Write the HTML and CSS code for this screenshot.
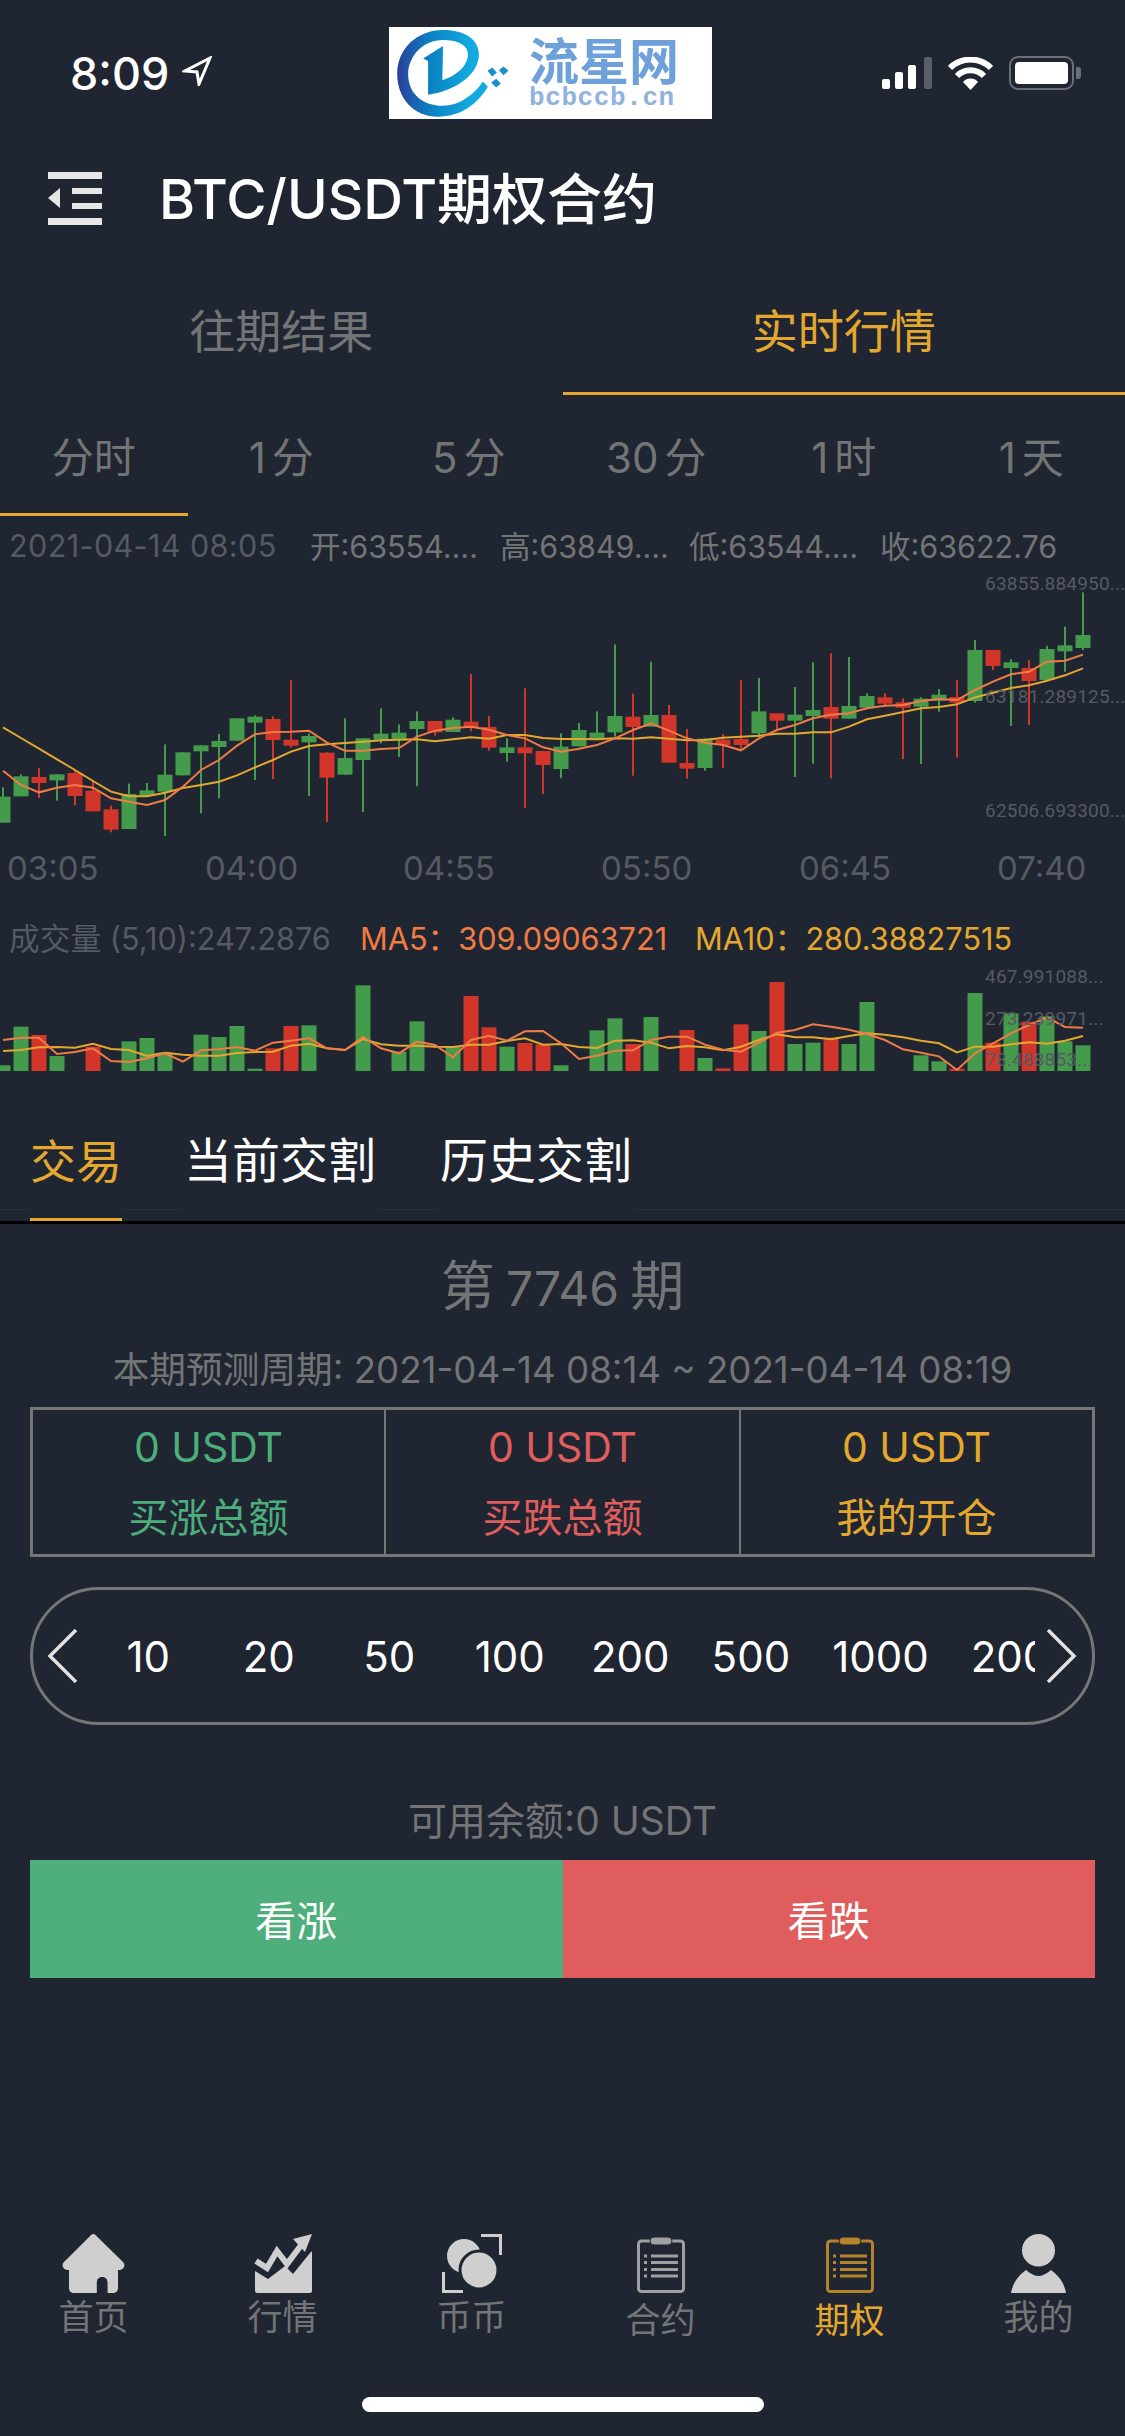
FILE: index.html
```html
<!DOCTYPE html>
<html lang="zh-CN">
<head>
    <meta charset="UTF-8">
    <meta name="viewport" content="width=device-width, initial-scale=1.0">
    <title>BTC/USDT期权合约</title>
    <link rel="stylesheet" href="styles.css">
</head>
<body>
    <div class="page">
        <div class="status-bar">
            <div class="status-time">
                <span>8:09</span>
                <svg class="location-icon" viewBox="0 0 30 30"><path d="M28 2 L3 15 L15 16 L17 28 Z"/></svg>
            </div>
            <div class="logo">
                <svg class="logo-mark" viewBox="112 57 336 262">
                    <defs>
                        <linearGradient id="logo-fill" x1="0" y1="0" x2="1" y2="0">
                            <stop offset="0" stop-color="#2c3f9a"/>
                            <stop offset="0.35" stop-color="#0b7fc1"/>
                            <stop offset="0.8" stop-color="#12aade"/>
                        </linearGradient>
                    </defs>
                    <path fill="url(#logo-fill)" d="M205 252 L205 150 L190 143 L250 105 L248 208 C290 195 325 165 325 130 C325 100 290 87 250 87 C190 87 145 135 145 190 C145 250 190 285 250 285 C300 285 345 250 370 212 L385 228 C350 285 300 318 235 318 C160 318 112 260 112 190 C112 110 175 57 250 57 C315 57 358 85 358 130 C358 190 290 240 205 252 Z"/>
                    <path fill="#1a8ecb" d="M384 180 L398 170 L412 185 L398 197 Z M418 178 L432 167 L447 180 L432 193 Z M395 215 L410 204 L424 218 L410 230 Z"/>
                </svg>
                <div class="logo-text">
                    <div class="logo-name">流星网</div>
                    <div class="logo-url">bcbccb.cn</div>
                </div>
            </div>
            <div class="status-icons">
                <svg class="signal-icon" viewBox="0 0 50 32">
                    <rect x="0" y="22" width="8" height="10" rx="2" fill="#fff"/>
                    <rect x="13" y="15" width="8" height="17" rx="2" fill="#fff"/>
                    <rect x="26" y="8" width="8" height="24" rx="2" fill="#fff"/>
                    <rect x="42" y="0" width="8" height="32" rx="2" fill="#5b5f67"/>
                </svg>
                <svg class="wifi-icon" viewBox="0 0 45 33">
                    <path d="M2 11 A29 29 0 0 1 43 11" fill="none" stroke="#fff" stroke-width="6"/>
                    <path d="M9 19 A19 19 0 0 1 36 19" fill="none" stroke="#fff" stroke-width="6"/>
                    <path d="M15 25 A10 10 0 0 1 30 25 L22.5 33 Z" fill="#fff"/>
                </svg>
                <div class="battery">
                    <div class="battery-level"></div>
                </div>
                <div class="battery-nub"></div>
            </div>
        </div>

        <div class="header">
            <svg class="menu-icon" viewBox="0 0 54 53">
                <rect x="0" y="0" width="54" height="7"/>
                <rect x="24" y="16" width="30" height="6"/>
                <rect x="24" y="31" width="30" height="6"/>
                <rect x="0" y="46" width="54" height="7"/>
                <path d="M12 16 L12 36 L0 26 Z"/>
            </svg>
            <h1 class="title">BTC/USDT期权合约</h1>
        </div>

        <div class="main-tabs">
            <div class="main-tab">往期结果</div>
            <div class="main-tab active">实时行情</div>
        </div>

        <div class="period-tabs">
            <div class="period-tab active">分时</div>
            <div class="period-tab">1 分</div>
            <div class="period-tab">5 分</div>
            <div class="period-tab">30 分</div>
            <div class="period-tab">1 时</div>
            <div class="period-tab">1 天</div>
        </div>

        <div class="ohlc">
            <span class="ohlc-date">2021-04-14 08:05</span>
            <span>开:63554....</span>
            <span>高:63849....</span>
            <span>低:63544....</span>
            <span>收:63622.76</span>
        </div>

        <div class="chart candle-chart">
            <svg id="candles" width="1125" height="270"></svg>
            <div class="axis-label price-high">63855.884950...</div>
            <div class="axis-label price-mid">63181.289125...</div>
            <div class="axis-label price-low">62506.693300...</div>
        </div>

        <div class="times">
            <span>03:05</span>
            <span>04:00</span>
            <span>04:55</span>
            <span>05:50</span>
            <span>06:45</span>
            <span>07:40</span>
        </div>

        <div class="volume-head">
            <span class="volume-name">成交量 (5,10):247.2876</span>
            <span class="ma5">MA5：309.09063721</span>
            <span class="ma10">MA10：280.38827515</span>
        </div>

        <div class="chart volume-chart">
            <svg id="volume" width="1125" height="114"></svg>
            <div class="axis-label volume-high">467.991088...</div>
            <div class="axis-label volume-mid">273.239971...</div>
            <div class="axis-label volume-low">78.488853...</div>
        </div>

        <div class="trade-tabs">
            <div class="trade-tab active">交易</div>
            <div class="trade-tab">当前交割</div>
            <div class="trade-tab">历史交割</div>
        </div>

        <div class="round-title">第 <span class="round-number">7746</span> 期</div>
        <div class="round-time">本期预测周期: 2021-04-14 08:14 ~ 2021-04-14 08:19</div>

        <div class="totals">
            <div class="total green">
                <div class="total-value">0 USDT</div>
                <div class="total-label">买涨总额</div>
            </div>
            <div class="total red">
                <div class="total-value">0 USDT</div>
                <div class="total-label">买跌总额</div>
            </div>
            <div class="total gold">
                <div class="total-value">0 USDT</div>
                <div class="total-label">我的开仓</div>
            </div>
        </div>

        <div class="amounts">
            <svg class="amount-arrow" viewBox="0 0 31 54"><path d="M29 1 L3 27 L29 53"/></svg>
            <div class="amount-list">
                <div class="amount">10</div>
                <div class="amount">20</div>
                <div class="amount">50</div>
                <div class="amount">100</div>
                <div class="amount">200</div>
                <div class="amount">500</div>
                <div class="amount">1000</div>
                <div class="amount">2000</div>
            </div>
            <svg class="amount-arrow" viewBox="0 0 31 54"><path d="M2 1 L28 27 L2 53"/></svg>
        </div>

        <div class="balance">可用余额:0 USDT</div>

        <div class="actions">
            <div class="action action-up">看涨</div>
            <div class="action action-down">看跌</div>
        </div>

        <div class="nav">
            <div class="nav-item">
                <svg class="nav-icon" width="63" height="59" viewBox="0 0 63 59">
                    <path d="M31.3 0 C32.5 0 33 .5 34 1.5 L61 28 C64 31 62 36 57 36 L56 36 L56 54 C56 57 54 59 51 59 L45.6 59 L45.6 49 C45.6 45 43.5 43 40.2 43 C37 43 34.8 45 34.8 49 L34.8 59 L12 59 C9 59 7 57 7 54 L7 36 L6 36 C1 36 -1 31 2 28 L28.6 1.5 C29.6 .5 30.2 0 31.3 0 Z"/>
                </svg>
                <div class="nav-label">首页</div>
            </div>
            <div class="nav-item">
                <svg class="nav-icon" width="58" height="59" viewBox="0 0 58 59">
                    <path d="M1 37 L14 45 L31 32 L39 40 L56 19 C57 17 58 17 58 19 L58 57 C58 58 57 59 56 59 L3 59 C2 59 1 58 1 57 Z"/>
                    <path class="nav-line" d="M2 27 L13 34 L23 17 L33 30 L48 10"/>
                    <path d="M39 5 L58 0 L51 18 Z"/>
                </svg>
                <div class="nav-label">行情</div>
            </div>
            <div class="nav-item">
                <svg class="nav-icon" width="60" height="59" viewBox="0 0 60 59">
                    <ellipse cx="22" cy="22" rx="17" ry="17"/>
                    <ellipse class="coin-front" cx="37" cy="36" rx="19" ry="19"/>
                    <path class="nav-corner" d="M39 1.5 L58.5 1.5 L58.5 21"/>
                    <path class="nav-corner" d="M1.5 38 L1.5 57.5 L21 57.5"/>
                </svg>
                <div class="nav-label">币币</div>
            </div>
            <div class="nav-item">
                <svg class="nav-icon clip-icon" width="48" height="62" viewBox="0 -4 48 62">
                    <rect class="clip-board" x="1.5" y="3" width="45" height="50.5" rx="3"/>
                    <rect class="clip-top" x="13" y="-1" width="22" height="8" rx="4"/>
                    <rect class="clip-mark" x="7" y="16.5" width="3" height="3"/>
                    <rect class="clip-mark" x="14" y="16.5" width="27" height="3"/>
                    <rect class="clip-mark" x="7" y="23" width="3" height="3"/>
                    <rect class="clip-mark" x="14" y="23" width="27" height="3"/>
                    <rect class="clip-mark" x="7" y="30" width="3" height="3"/>
                    <rect class="clip-mark" x="14" y="30" width="27" height="3"/>
                    <rect class="clip-mark" x="7" y="36.5" width="3" height="3"/>
                    <rect class="clip-mark" x="14" y="36.5" width="27" height="3"/>
                </svg>
                <div class="nav-label">合约</div>
            </div>
            <div class="nav-item active">
                <svg class="nav-icon clip-icon" width="48" height="62" viewBox="0 -4 48 62">
                    <rect class="clip-board" x="1.5" y="3" width="45" height="50.5" rx="3"/>
                    <rect class="clip-top" x="13" y="-1" width="22" height="8" rx="4"/>
                    <rect class="clip-mark" x="7" y="16.5" width="3" height="3"/>
                    <rect class="clip-mark" x="14" y="16.5" width="27" height="3"/>
                    <rect class="clip-mark" x="7" y="23" width="3" height="3"/>
                    <rect class="clip-mark" x="14" y="23" width="27" height="3"/>
                    <rect class="clip-mark" x="7" y="30" width="3" height="3"/>
                    <rect class="clip-mark" x="14" y="30" width="27" height="3"/>
                    <rect class="clip-mark" x="7" y="36.5" width="3" height="3"/>
                    <rect class="clip-mark" x="14" y="36.5" width="27" height="3"/>
                </svg>
                <div class="nav-label">期权</div>
            </div>
            <div class="nav-item">
                <svg class="nav-icon" width="55" height="59" viewBox="0 0 55 59">
                    <ellipse cx="27.5" cy="16.3" rx="16.5" ry="16.3"/>
                    <path d="M0 59 C2 48 8 41 15 36 C20 40 24 42 27.5 42 C31 42 35 40 40 36 C47 41 53 48 55 59 Z"/>
                </svg>
                <div class="nav-label">我的</div>
            </div>
        </div>

        <div class="home-bar"></div>
    </div>

    <script src="chart.js"></script>
</body>
</html>
```

FILE: styles.css
```css
* {
    box-sizing: border-box;
}
body {
    margin: 0;
    padding: 0;
    background-color: #1f2531;
    font-family: Inter, "Noto Sans CJK SC", sans-serif;
}
.page {
    width: 1125px;
    height: 2436px;
    display: flex;
    flex-direction: column;
    overflow: hidden;
    background-color: #1f2531;
    color: #737476;
}

/* status bar */
.status-bar {
    height: 130px;
    padding-top: 27px;
    display: grid;
    grid-template-columns: 389px 323px 1fr;
}
.status-time {
    height: 92px;
    padding-left: 70px;
    display: flex;
    align-items: center;
    gap: 13px;
    color: #fff;
    font-size: 45px;
    font-weight: 500;
}
.location-icon {
    width: 30px;
    height: 30px;
    margin-top: -4px;
    fill: none;
    stroke: #fff;
    stroke-width: 3;
}
.logo {
    height: 92px;
    display: flex;
    align-items: center;
    background-color: #fff;
    padding-left: 8px;
}
.logo-mark {
    width: 112px;
    height: 87px;
}
.logo-text {
    margin-left: 20px;
    width: 150px;
}
.logo-name {
    font-size: 50px;
    line-height: 50px;
    font-weight: 700;
    color: #6ea1da;
}
.logo-url {
    font-family: "Liberation Mono", monospace;
    font-size: 26px;
    line-height: 22px;
    font-weight: 700;
    letter-spacing: 0.6px;
    color: #8fb2e0;
}
.status-icons {
    height: 92px;
    padding-left: 170px;
    display: flex;
    align-items: center;
}
.signal-icon {
    width: 50px;
    height: 32px;
    margin-right: 16px;
}
.wifi-icon {
    width: 45px;
    height: 33px;
    margin-right: 16px;
}
.battery {
    width: 65px;
    height: 34px;
    padding: 4px;
    border: 2px solid #6b6f76;
    border-radius: 9px;
}
.battery-level {
    height: 100%;
    background-color: #fff;
    border-radius: 4px;
}
.battery-nub {
    width: 5px;
    height: 12px;
    margin-left: 2px;
    background-color: #6b6f76;
    border-radius: 0 3px 3px 0;
}

/* header */
.header {
    height: 136px;
    padding-left: 48px;
    display: flex;
    align-items: center;
    gap: 57px;
}
.menu-icon {
    width: 54px;
    height: 53px;
    fill: #e6e6e6;
}
.title {
    margin: -7px 0 0;
    font-size: 55px;
    font-weight: 500;
    color: #fff;
}

/* tabs */
.main-tabs {
    height: 129px;
    display: flex;
}
.main-tab {
    flex: 1;
    padding-bottom: 2px;
    display: flex;
    align-items: center;
    justify-content: center;
    font-size: 46px;
    border-bottom: 3px solid transparent;
}
.main-tab.active {
    color: #e5a82f;
    border-bottom-color: #e5a82f;
}
.period-tabs {
    height: 121px;
    display: flex;
}
.period-tab {
    flex: 1;
    display: flex;
    align-items: center;
    justify-content: center;
    font-size: 42px;
    word-spacing: -6px;
    border-bottom: 3px solid transparent;
}
.period-tab.active {
    border-bottom-color: #e5a82f;
}

/* chart */
.ohlc {
    height: 58px;
    padding-left: 9px;
    display: grid;
    grid-template-columns: 301px 190px 189px 191px 1fr;
    align-items: center;
    font-size: 30.5px;
    white-space: nowrap;
}
.ohlc-date {
    color: #555a63;
    letter-spacing: 0.4px;
}
.chart {
    position: relative;
}
.chart svg {
    display: block;
}
.candle-chart {
    height: 270px;
}
.axis-label {
    position: absolute;
    left: 985px;
    font-family: Roboto, sans-serif;
    font-size: 19px;
    line-height: 24px;
    letter-spacing: 0.2px;
    color: #555a63;
    white-space: nowrap;
}
.price-high {
    top: -2px;
}
.price-mid {
    top: 111px;
}
.price-low {
    top: 225px;
}
.volume-high {
    top: 3px;
}
.volume-mid {
    top: 45px;
}
.volume-low {
    top: 86px;
}
.times {
    height: 48px;
    padding-left: 7px;
    display: grid;
    grid-template-columns: repeat(6, 198px);
    align-items: center;
    font-size: 33px;
    color: #555a63;
}
.volume-head {
    height: 50px;
    margin-top: 19px;
    margin-bottom: 1px;
    padding-left: 9px;
    display: flex;
    align-items: center;
    font-size: 30.7px;
    white-space: nowrap;
}
.volume-name {
    width: 351px;
    color: #555a63;
}
.ma5 {
    width: 335px;
    color: #f07c45;
}
.ma10 {
    color: #e5a82f;
}
.volume-chart {
    height: 114px;
}

/* trade tabs */
.trade-tabs {
    height: 148px;
    padding-left: 30px;
    display: flex;
    gap: 60px;
    border-bottom: 3px solid #000;
    background: linear-gradient(#2a2f3a, #2a2f3a) 0 133px / 100% 1px no-repeat;
    font-size: 48px;
    color: #fff;
}
.trade-tab {
    padding: 59px 2px 0;
    line-height: 52px;
    white-space: nowrap;
    background-color: #1f2531;
    border-bottom: 3px solid transparent;
}
.trade-tab.active {
    padding: 59px 0 0;
    font-size: 46px;
    color: #e5a82f;
    border-bottom-color: #e5a82f;
}

/* current round */
.round-title {
    height: 60px;
    margin-top: 33px;
    font-size: 54px;
    line-height: 60px;
    word-spacing: -4px;
    text-align: center;
}
.round-number {
    font-size: 48px;
}
.round-time {
    height: 50px;
    margin-top: 28px;
    font-size: 36.7px;
    line-height: 50px;
    text-align: center;
    white-space: nowrap;
}
.totals {
    height: 150px;
    margin: 12px 30px 0;
    display: grid;
    grid-template-columns: 351px 355px 1fr;
    border: 3px solid #767676;
    font-size: 41px;
    text-align: center;
}
.total {
    padding-top: 12px;
    border-left: 2px solid #767676;
}
.total:first-child {
    border-left: none;
}
.total-value {
    height: 50px;
    line-height: 50px;
}
.total-label {
    height: 50px;
    margin-top: 21px;
    font-size: 40px;
    line-height: 50px;
}
.green {
    color: #4cae7c;
}
.red {
    color: #e05d5d;
}
.gold {
    color: #e5a82f;
}

/* amount picker */
.amounts {
    height: 138px;
    margin: 30px 30px 0;
    padding: 0 15px 0 14px;
    display: flex;
    align-items: center;
    border: 3px solid #767676;
    border-radius: 69px;
}
.amount-arrow {
    flex: none;
    width: 31px;
    height: 54px;
    fill: none;
    stroke: #e2e2e2;
    stroke-width: 3.5;
}
.amount-list {
    flex: 1;
    margin: 0 11px 0 10px;
    display: flex;
    overflow: hidden;
    font-size: 42px;
    color: #fff;
}
.amount {
    flex: none;
    min-width: 120.5px;
    padding: 0 21px;
    text-align: center;
}

/* balance and buttons */
.balance {
    height: 50px;
    margin-top: 71px;
    font-size: 39px;
    line-height: 50px;
    text-align: center;
}
.actions {
    height: 118px;
    margin: 14px 30px 0;
    display: flex;
    font-size: 41px;
    color: #fff;
}
.action {
    flex: 1;
    padding-bottom: 2px;
    display: flex;
    align-items: center;
    justify-content: center;
}
.action-up {
    background-color: #4eaf7c;
}
.action-down {
    background-color: #e05d5d;
}

/* bottom nav */
.nav {
    margin-top: auto;
    margin-left: -1px;
    display: grid;
    grid-template-columns: repeat(6, 189px);
    font-size: 35px;
}
.nav-item {
    display: flex;
    flex-direction: column;
    align-items: center;
}
.nav-icon {
    display: block;
    fill: #cfcfcf;
}
.nav-label {
    height: 40px;
    margin-top: 4px;
    line-height: 40px;
    color: #737476;
}
.nav-item.active .nav-label {
    color: #e5a82f;
}
.nav-line {
    fill: none;
    stroke: #cfcfcf;
    stroke-width: 6;
}
.coin-front {
    stroke: #1f2531;
    stroke-width: 3;
}
.nav-corner {
    fill: none;
    stroke: #cfcfcf;
    stroke-width: 3;
}
.clip-board {
    fill: none;
    stroke: #a0a0a0;
    stroke-width: 3;
}
.clip-top {
    fill: #a0a0a0;
    stroke: #1f2531;
    stroke-width: 1;
}
.clip-mark {
    fill: #a0a0a0;
}
.nav-item.active .clip-board {
    stroke: #b5832a;
}
.nav-item.active .clip-top,
.nav-item.active .clip-mark {
    fill: #b5832a;
}
.home-bar {
    width: 402px;
    height: 15px;
    margin: 57px 0 24px 362px;
    background-color: #fff;
    border-radius: 8px;
}
```

FILE: chart.js
```js
// all chart values are read off the picture at 3x, so they get divided by 3 below
var SVG_NS = 'http://www.w3.org/2000/svg';
var GREEN = '#459b4c';
var RED = '#d2362b';
var ORANGE = '#f07c45';
var GOLD = '#e5a82f';

// color, wick top, body top, body bottom, wick bottom
var candles = [
    ['g', 802, 830, 908, 908], ['g', 763, 769, 829, 829], ['r', 744, 771, 789, 834], ['g', 763, 763, 781, 842],
    ['r', 752, 759, 828, 856], ['r', 782, 812, 874, 874], ['r', 857, 868, 929, 937], ['g', 791, 822, 927, 927],
    ['g', 789, 811, 827, 827], ['g', 673, 764, 815, 948], ['g', 697, 697, 766, 766], ['g', 676, 676, 694, 880],
    ['g', 642, 663, 681, 835], ['g', 595, 595, 662, 662], ['g', 586, 590, 608, 780], ['r', 589, 597, 660, 777],
    ['r', 480, 659, 677, 683], ['g', 640, 648, 667, 828], ['r', 697, 698, 773, 906], ['g', 595, 714, 764, 764],
    ['g', 655, 655, 720, 876], ['g', 565, 641, 659, 670], ['g', 613, 638, 658, 711], ['g', 574, 603, 627, 799],
    ['r', 603, 603, 637, 647], ['g', 592, 599, 636, 636], ['r', 462, 605, 622, 634], ['r', 588, 621, 683, 692],
    ['g', 655, 682, 699, 725], ['r', 505, 682, 700, 864], ['r', 693, 693, 735, 822], ['g', 640, 680, 747, 775],
    ['g', 609, 630, 679, 679], ['g', 574, 638, 657, 657], ['g', 373, 588, 637, 650], ['r', 521, 590, 621, 767],
    ['g', 425, 585, 620, 620], ['r', 555, 585, 728, 728], ['r', 627, 729, 746, 776], ['g', 655, 656, 744, 752],
    ['r', 642, 659, 675, 744], ['r', 480, 657, 675, 686], ['g', 474, 574, 640, 650], ['r', 580, 580, 602, 630],
    ['g', 501, 584, 602, 771], ['g', 427, 570, 588, 731], ['r', 400, 561, 596, 775], ['g', 411, 558, 596, 596],
    ['g', 520, 528, 563, 563], ['r', 520, 532, 551, 560], ['r', 535, 547, 563, 717], ['g', 532, 536, 560, 732],
    ['g', 507, 524, 542, 575], ['r', 480, 531, 548, 713], ['g', 360, 390, 543, 548], ['r', 390, 390, 438, 450],
    ['g', 418, 427, 444, 618], ['r', 421, 444, 483, 615], ['g', 377, 387, 480, 480], ['g', 320, 376, 394, 455],
    ['g', 217, 345, 384, 390]
];
var priceMa5 = [752, 795, 817, 803, 795, 803, 835, 845, 855, 840, 800, 750, 720, 677, 643, 636, 635, 632, 668, 692, 692,
    687, 684, 650, 632, 624, 620, 629, 645, 655, 682, 695, 686, 675, 655, 630, 611, 632, 655, 668, 675, 691, 655, 630,
    615, 595, 584, 580, 565, 557, 555, 543, 537, 540, 510, 485, 463, 455, 425, 422, 404];
var priceMa10 = [622, 654, 686, 718, 750, 783, 815, 829, 829, 818, 804, 795, 785, 766, 742, 720, 695, 678, 673, 669, 665,
    661, 659, 658, 664, 658, 652, 656, 645, 645, 654, 657, 657, 658, 655, 656, 652, 656, 661, 660, 653, 650, 647, 641,
    641, 637, 637, 620, 598, 587, 576, 565, 561, 553, 532, 518, 504, 496, 482, 466, 445];

// color and bar top, null where the bar is too small to see
var volumes = [
    ['g', 496], ['g', 380], ['r', 405], ['g', 468], null, ['r', 440], null, ['g', 424], ['g', 414], ['g', 458], null,
    ['g', 404], ['g', 411], ['g', 378], ['g', 506], ['r', 445], ['r', 378], ['g', 376], null, null, ['g', 256], null,
    ['g', 455], ['g', 364], null, ['g', 440], ['r', 288], ['r', 382], ['g', 440], ['r', 429], ['r', 434], ['g', 496],
    null, ['g', 391], ['g', 355], ['r', 432], ['g', 351], null, ['r', 390], ['g', 474], ['r', 505], ['r', 373],
    ['g', 393], ['r', 246], ['g', 432], ['g', 428], ['r', 413], ['g', 432], ['g', 306], null, null, ['g', 466],
    ['g', 484], ['r', 506], ['g', 279], ['r', 428], ['g', 340], ['r', 365], ['g', 349], ['g', 424], ['g', 436]
];
var volumeMa5 = [420, 413, 413, 462, 456, 445, 483, 486, 475, 460, 485, 451, 448, 441, 452, 428, 422, 415, 445, 450, 411,
    445, 460, 425, 435, 472, 420, 407, 422, 394, 393, 430, 477, 467, 452, 451, 420, 410, 410, 434, 449, 455, 428, 398,
    390, 373, 380, 389, 402, 420, 448, 458, 469, 510, 460, 430, 400, 375, 352, 381, 383];
var volumeMa10 = [453, 450, 442, 441, 443, 431, 447, 450, 468, 458, 464, 467, 467, 459, 456, 455, 437, 431, 445, 450, 417,
    433, 437, 437, 440, 441, 434, 434, 423, 415, 434, 432, 441, 444, 422, 421, 428, 445, 438, 442, 451, 440, 420, 403,
    412, 412, 418, 408, 400, 404, 412, 422, 430, 457, 440, 440, 433, 427, 431, 422, 408];

function xAt(i) {
    return 3 + 18 * i;
}

function addRect(svg, x, y, width, height, color) {
    var rect = document.createElementNS(SVG_NS, 'rect');
    rect.setAttribute('x', x);
    rect.setAttribute('y', y);
    rect.setAttribute('width', width);
    rect.setAttribute('height', height);
    rect.setAttribute('fill', color);
    svg.appendChild(rect);
}

function addLine(svg, values, top, color) {
    var points = [];
    for (var i = 0; i < values.length; i++) {
        points.push(xAt(i) + ',' + (values[i] / 3 - top));
    }
    var line = document.createElementNS(SVG_NS, 'polyline');
    line.setAttribute('points', points.join(' '));
    line.setAttribute('fill', 'none');
    line.setAttribute('stroke', color);
    line.setAttribute('stroke-width', 2);
    svg.appendChild(line);
}

var candleSvg = document.getElementById('candles');
for (var i = 0; i < candles.length; i++) {
    var c = candles[i];
    var color = c[0] === 'g' ? GREEN : RED;
    addRect(candleSvg, xAt(i) - 1, c[1] / 3 - 54, 2, (c[4] - c[1]) / 3, color);
    addRect(candleSvg, xAt(i) - 7.5, c[2] / 3 - 54, 15, (c[3] - c[2]) / 3, color);
}
addLine(candleSvg, priceMa10, 54, GOLD);
addLine(candleSvg, priceMa5, 54, ORANGE);

var volumeSvg = document.getElementById('volume');
for (var j = 0; j < volumes.length; j++) {
    var v = volumes[j];
    if (v) {
        addRect(volumeSvg, xAt(j) - 7.5, v[1] / 3 - 62, 15, (513 - v[1]) / 3, v[0] === 'g' ? GREEN : RED);
    }
}
addLine(volumeSvg, volumeMa10, 62, GOLD);
addLine(volumeSvg, volumeMa5, 62, ORANGE);
```
